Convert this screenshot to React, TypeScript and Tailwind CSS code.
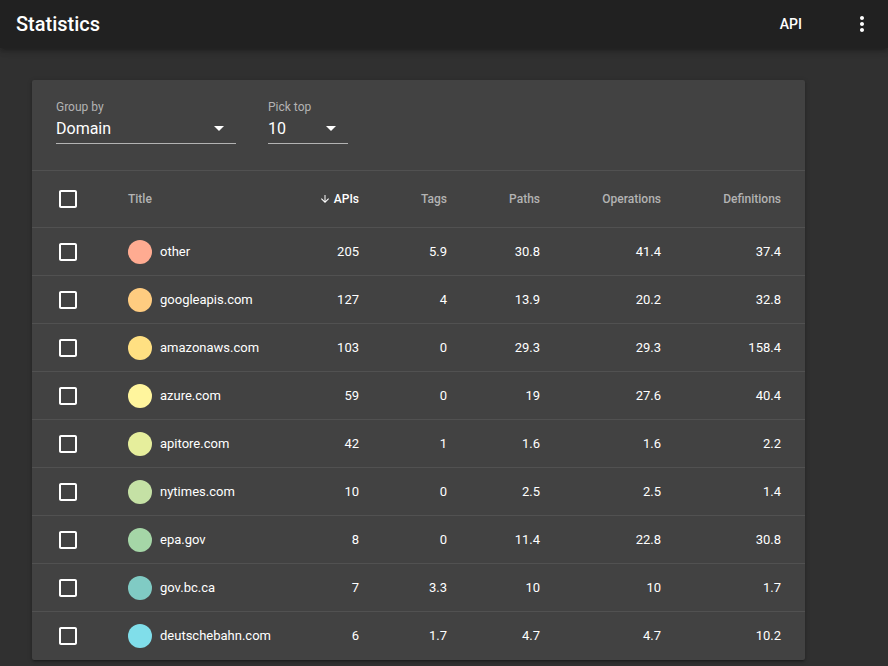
import React from "react";

const rows = [
  { t: "other", c: "#ffab91", v: ["205", "5.9", "30.8", "41.4", "37.4"] },
  { t: "googleapis.com", c: "#ffcc80", v: ["127", "4", "13.9", "20.2", "32.8"] },
  { t: "amazonaws.com", c: "#ffe082", v: ["103", "0", "29.3", "29.3", "158.4"] },
  { t: "azure.com", c: "#fff59d", v: ["59", "0", "19", "27.6", "40.4"] },
  { t: "apitore.com", c: "#e6ee9c", v: ["42", "1", "1.6", "1.6", "2.2"] },
  { t: "nytimes.com", c: "#c5e1a5", v: ["10", "0", "2.5", "2.5", "1.4"] },
  { t: "epa.gov", c: "#a5d6a7", v: ["8", "0", "11.4", "22.8", "30.8"] },
  { t: "gov.bc.ca", c: "#80cbc4", v: ["7", "3.3", "10", "10", "1.7"] },
  { t: "deutschebahn.com", c: "#80deea", v: ["6", "1.7", "4.7", "4.7", "10.2"] },
];

const grid = "grid grid-cols-[96px_152px_79px_88px_93px_121px_120px] pr-6 items-center";

function Box() {
  return (
    <svg width="24" height="24" viewBox="0 0 24 24" className="ml-6">
      <path
        fill="#ffffff"
        d="M19 5v14H5V5h14m0-2H5c-1.11 0-2 .9-2 2v14c0 1.1.89 2 2 2h14c1.1 0 2-.9 2-2V5c0-1.1-.9-2-2-2z"
      />
    </svg>
  );
}

function Arrow() {
  return (
    <svg width="24" height="24" viewBox="0 0 24 24" className="ml-auto mr-[5px]">
      <path fill="#ffffff" d="M7 10l5 5 5-5z" />
    </svg>
  );
}

export default function App() {
  return (
    <div className="min-h-screen bg-[#303030] text-white" style={{ fontFamily: "Roboto, 'Noto Sans', sans-serif" }}>
      <div className="h-12 bg-[#212121] flex items-center pl-4 shadow-[0_2px_4px_-1px_rgba(0,0,0,0.2),0_4px_5px_0_rgba(0,0,0,0.14),0_1px_10px_0_rgba(0,0,0,0.12)] relative z-10">
        <div className="text-[20px] font-medium leading-none">Statistics</div>
        <div className="ml-auto text-[14px] font-medium">API</div>
        <svg width="24" height="24" viewBox="0 0 24 24" className="ml-[48px] mr-[14px]">
          <path
            fill="#ffffff"
            d="M12 8c1.1 0 2-.9 2-2s-.9-2-2-2-2 .9-2 2 .9 2 2 2zm0 2c-1.1 0-2 .9-2 2s.9 2 2 2 2-.9 2-2-.9-2-2-2zm0 6c-1.1 0-2 .9-2 2s.9 2 2 2 2-.9 2-2-.9-2-2-2z"
          />
        </svg>
      </div>
      <div className="pt-8 pl-8">
        <div className="w-[773px] bg-[#424242] rounded-[2px] shadow-[0_1px_5px_0_rgba(0,0,0,0.2),0_2px_2px_0_rgba(0,0,0,0.14),0_3px_1px_-2px_rgba(0,0,0,0.12)] overflow-hidden">
          <div className="h-[91px] border-b border-[#515151] px-6 pt-5 flex gap-8">
            <div className="w-[180px]">
              <div className="text-[12px] leading-[14px] text-[#b3b3b3]">Group by</div>
              <div className="mt-[5px] flex items-center h-[25px] border-b border-[#b3b3b3] pb-[6px] relative">
                <span className="text-[16px] leading-[19px]">Domain</span>
                <Arrow />
              </div>
            </div>
            <div className="w-[80px]">
              <div className="text-[12px] leading-[14px] text-[#b3b3b3]">Pick top</div>
              <div className="mt-[5px] flex items-center h-[25px] border-b border-[#b3b3b3] pb-[6px]">
                <span className="text-[16px] leading-[19px]">10</span>
                <Arrow />
              </div>
            </div>
          </div>
          <div className={`${grid} h-[57px] border-b border-[#515151] text-[12px] font-medium text-[#b3b3b3]`}>
            <div className="flex items-center"><Box /></div>
            <div>Title</div>
            <div className="flex items-center justify-end text-white">
              <svg width="12" height="12" viewBox="0 0 24 24" className="mr-[3px]">
                <path fill="#ffffff" d="M20 12l-1.41-1.41L13 16.17V4h-2v12.17l-5.58-5.59L4 12l8 8 8-8z" />
              </svg>
              APIs
            </div>
            <div className="text-right">Tags</div>
            <div className="text-right">Paths</div>
            <div className="text-right">Operations</div>
            <div className="text-right">Definitions</div>
          </div>
          {rows.map((r, i) => (
            <div
              key={r.t}
              className={`${grid} h-[48px] text-[13px] text-white ${i < rows.length - 1 ? "border-b border-[#515151]" : ""}`}
            >
              <div className="flex items-center"><Box /></div>
              <div className="flex items-center gap-2">
                <span className="w-6 h-6 rounded-full" style={{ backgroundColor: r.c }} />
                <span>{r.t}</span>
              </div>
              {r.v.map((v, j) => (
                <div key={j} className="text-right">{v}</div>
              ))}
            </div>
          ))}
        </div>
      </div>
    </div>
  );
}
